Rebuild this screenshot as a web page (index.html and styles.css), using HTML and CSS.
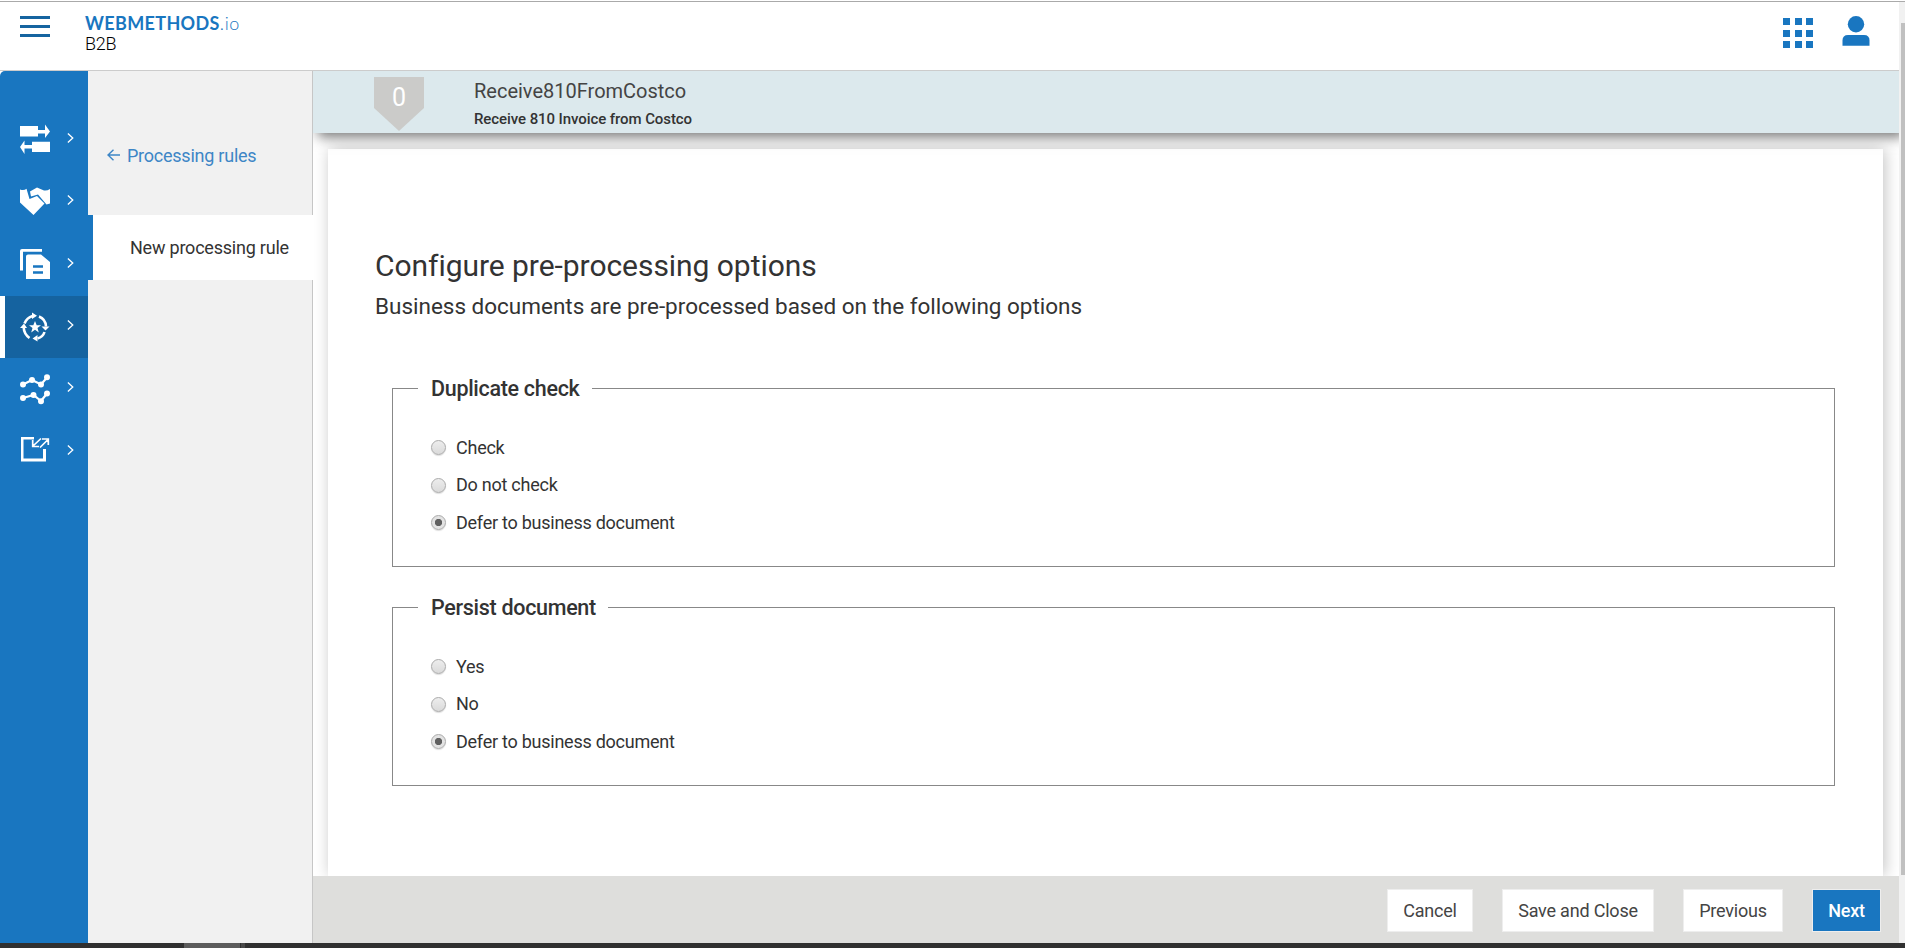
FILE: index.html
```html
<!DOCTYPE html>
<html lang="en">
<head>
<meta charset="utf-8">
<title>webMethods.io B2B</title>
<link rel="stylesheet" href="styles.css">
</head>
<body>
<div class="window">
  <div class="app">
    <header class="header">
      <div class="menu"><span></span><span></span><span></span></div>
      <div class="brand">
        <div class="brand-name"><b>WEBMETHODS</b><span>.io</span></div>
        <div class="brand-product">B2B</div>
      </div>
      <div class="header-tools">
        <div class="apps"><i></i><i></i><i></i><i></i><i></i><i></i><i></i><i></i><i></i></div>
        <svg class="user" width="28" height="30" viewBox="0 0 28 30"><circle cx="14" cy="8.2" r="8.2"/><path d="M0.5 29.7V24.5Q0.500 19 6 19H22Q27.500 19 27.500 24.500V29.700Z"/></svg>
      </div>
    </header>
    <div class="body">
      <nav class="rail">
        <a class="rail-item"><svg class="icon" viewBox="0 0 30 30"><path d="M0 3H18V7H25V1.500L30 8.500L25 15V10.500H18V13.500H0ZM30 29H12V25.500H4.500V31L0 24L4.500 17.500V22H12V18.700H30Z"/></svg><svg class="chev" viewBox="0 0 8 12"><path d="M1 .8L6.600 6L1 11.200"/></svg></a>
        <a class="rail-item"><svg class="icon" viewBox="0 0 30 30"><path d="M0 4.500Q4 6 6.500 3.800L9.500 14L17 11L24.500 18.500L13.500 30L0 17.500ZM10 6.500L17 2.500L24 5.500Q27 6 30 4V18.500L26.500 19.500L18 9.500L11 11.500Z"/></svg><svg class="chev" viewBox="0 0 8 12"><path d="M1 .8L6.600 6L1 11.200"/></svg></a>
        <a class="rail-item"><svg class="icon icon-low" viewBox="0 0 30 30"><path d="M2 0H22V2.700H3V21.500H0V2Q0 0 2 0ZM8 5.500H21L30 13V30H6V7.500Q6 5.500 8 5.500Z"/><path class="cut" d="M13 17.500H23M13 23.500H23"/></svg><svg class="chev" viewBox="0 0 8 12"><path d="M1 .8L6.600 6L1 11.200"/></svg></a>
        <a class="rail-item rail-item-active"><svg class="icon icon-low" viewBox="0 0 30 30"><path d="M15 9L16.700 13.300H21L17.500 16L18.800 20.500L15 17.800L11.200 20.500L12.500 16L9 13.300H13.300ZM12 0.500L17 3.700L12 7ZM21.500 14.500H29.500L25.500 18.500ZM17.500 29.500L12.500 26.500L17.500 23ZM0 16L4 11.500L7 16Z"/><path class="line" d="M4.500 11.500Q7 5.500 12.500 4M19 4.500Q25.500 7 26 14.500M24.500 20Q23 25 17.500 26.500M9.500 26Q4 22 3.700 15.500"/></svg><svg class="chev" viewBox="0 0 8 12"><path d="M1 .8L6.600 6L1 11.200"/></svg></a>
        <a class="rail-item"><svg class="icon icon-low" viewBox="0 0 30 30"><path class="line thin" d="M3 10.500L12 6L21 10.500L27 3.500M3 24L13.500 21L21 27L27 19.500"/><path d="M0 10.500a3 3 0 1 0 6 0a3 3 0 1 0-6 0M9 6a3 3 0 1 0 6 0a3 3 0 1 0-6 0M18 10.500a3 3 0 1 0 6 0a3 3 0 1 0-6 0M24 3.300a3 3 0 1 0 6 0a3 3 0 1 0-6 0M0 24a3 3 0 1 0 6 0a3 3 0 1 0-6 0M10.500 21a3 3 0 1 0 6 0a3 3 0 1 0-6 0M18 27.300a3 3 0 1 0 6 0a3 3 0 1 0-6 0M24 19.500a3 3 0 1 0 6 0a3 3 0 1 0-6 0"/></svg><svg class="chev" viewBox="0 0 8 12"><path d="M1 .8L6.600 6L1 11.200"/></svg></a>
        <a class="rail-item"><svg class="icon" viewBox="0 0 30 30"><path d="M1 2H14V4.500H3.500V23.500H23V14H26V26.500H1Z"/><path class="line slim" d="M21 3.500L13.500 10.500M12.700 5V11.500H19M20 12.500L27.500 5M22 4H28.300V10"/></svg><svg class="chev" viewBox="0 0 8 12"><path d="M1 .8L6.600 6L1 11.200"/></svg></a>
      </nav>
      <aside class="subnav">
        <a class="back"><svg width="13" height="12" viewBox="0 0 13 12"><path d="M13 6H1M6.500 .7L1 6L6.500 11.300"/></svg><span>Processing rules</span></a>
        <a class="subnav-item">New processing rule</a>
      </aside>
      <main class="main">
        <div class="rulebar">
          <div class="tag">0</div>
          <div>
            <div class="rule-name">Receive810FromCostco</div>
            <div class="rule-desc">Receive 810 Invoice from Costco</div>
          </div>
        </div>
        <div class="canvas">
          <section class="card">
            <h1 class="title">Configure pre-processing options</h1>
            <p class="subtitle">Business documents are pre-processed based on the following options</p>
            <fieldset class="group">
              <legend class="legend">Duplicate check</legend>
              <div class="option"><i class="radio"></i>Check</div>
              <div class="option"><i class="radio"></i>Do not check</div>
              <div class="option"><i class="radio radio-on"></i>Defer to business document</div>
            </fieldset>
            <fieldset class="group">
              <legend class="legend">Persist document</legend>
              <div class="option"><i class="radio"></i>Yes</div>
              <div class="option"><i class="radio"></i>No</div>
              <div class="option"><i class="radio radio-on"></i>Defer to business document</div>
            </fieldset>
          </section>
        </div>
        <footer class="actions">
          <a class="button cancel">Cancel</a>
          <a class="button save">Save and Close</a>
          <a class="button previous">Previous</a>
          <a class="button next">Next</a>
        </footer>
      </main>
    </div>
  </div>
  <div class="scrollbar"><div class="thumb"></div></div>
</div>
<div class="taskbar"><i></i><b></b></div>
</body>
</html>
```
FILE: styles.css
```css
* { box-sizing: border-box; }
body {
  margin: 0;
  width: 1905px;
  height: 948px;
  overflow: hidden;
  background: #fff;
  color: #333;
  font: 18px/24px Roboto, sans-serif;
}
.window { display: flex; height: 942px; margin-top: 1px; border-top: 1px solid #aaa; }
.app { width: 1899px; display: flex; flex-direction: column; }
.header { display: flex; height: 69px; border-bottom: 1px solid #ccc; }
.menu { width: 66px; padding: 14px 16px 0 20px; }
.menu span { display: block; height: 3px; margin-bottom: 6px; background: #1664a0; }
.brand { margin-left: 19px; padding-top: 10px; }
.brand-name { color: #1976c0; font: 18px/23px Lato, sans-serif; }
.brand-name b { font-weight: 700; letter-spacing: 0.35px; }
.brand-name span { font-weight: 300; letter-spacing: 0.7px; }
.brand-product { color: #000; font-weight: 300; line-height: 20px; letter-spacing: -0.2px; margin-top: -1px; }
.header-tools { display: flex; margin-left: auto; padding-right: 29px; gap: 29px; }
.apps {
  display: grid;
  grid-template-columns: repeat(3, 7px);
  grid-template-rows: repeat(3, 7px);
  gap: 4.5px;
  margin-top: 16px;
}
.apps i { background: #1976c0; }
.user { margin-top: 14px; fill: #1976c0; }
.body { display: flex; flex: 1; min-height: 0; }

.rail { width: 88px; padding-top: 38px; background: #1976c0; border-radius: 5px 0 0; }
.rail-item { display: flex; align-items: center; height: 62.3px; padding: 0 14px 4px 20px; gap: 17px; }
.rail-item-active { background: #1563a0; border-left: 5px solid #fff; padding-left: 15px; }
.icon { width: 30px; height: 30px; fill: #fff; overflow: visible; }
.icon-low { margin-top: 3px; }
.icon .cut { stroke: #1976c0; stroke-width: 2.5; }
.icon .line { fill: none; stroke: #fff; stroke-width: 2.6; }
.icon .thin { stroke-width: 2.2; }
.icon .slim { stroke-width: 1.7; }
.chev { width: 8px; height: 12px; fill: none; stroke: #fff; stroke-width: 1.5; }

.subnav { width: 225px; padding-top: 73px; letter-spacing: -0.22px; background: linear-gradient(to right, #f1f1f1 224px, #c6c6c6 224px); }
.back { display: flex; align-items: center; height: 24px; padding-left: 19px; gap: 7px; color: #3d86c6; letter-spacing: -0.24px; }
.back svg { margin-top: -2px; fill: none; stroke: #3d86c6; stroke-width: 1.4; }
.subnav-item { display: block; height: 65px; margin-top: 47px; padding: 21px 0 0 37px; border-left: 5px solid #1976c0; background: #fff; }

.main { display: flex; flex-direction: column; width: 1586px; overflow: hidden; }
.rulebar {
  position: relative;
  display: flex;
  height: 62px;
  flex: none;
  padding: 6px 0 0 61px;
  background: #dce9ed;
  box-shadow: 5px 4px 12px #777;
}
.tag {
  width: 50px;
  height: 54px;
  margin-right: 50px;
  background: #cbcbc9;
  clip-path: polygon(0 0, 100% 0, 100% 31px, 50% 100%, 0 31px);
  color: #fff;
  font-size: 25px;
  line-height: 41px;
  text-align: center;
}
.rule-name { margin-top: 2px; color: #444; font-size: 20px; line-height: 24px; }
.rule-desc { margin-top: 6px; font-size: 15px; line-height: 20px; font-weight: 500; letter-spacing: -0.08px; }
.canvas { flex: 1; min-height: 0; padding: 16px 16px 0 15px; overflow: hidden; }
.card { height: 727px; padding: 99px 48px 0 47px; background: #fff; box-shadow: 2px 0 15px rgba(0, 0, 0, .24); }
.title { margin: 0; font-size: 30px; font-weight: 400; line-height: 36px; letter-spacing: -0.05px; }
.subtitle { margin: 8px 0 0; font-size: 22.5px; line-height: 28px; letter-spacing: -0.01px; }
.group { height: 193px; margin: 54px 0 0 17px; padding: 27px 0 0 38px; border: 1px solid #888; }
.group + .group { margin-top: 26px; }
.legend { margin-left: -13px; padding: 2px 12px 0 13px; font-size: 21.5px; line-height: 26px; font-weight: 500; letter-spacing: -0.3px; }
.option { display: flex; align-items: center; gap: 10px; height: 37.5px; letter-spacing: -0.25px; }
.radio {
  width: 15px;
  height: 15px;
  border: 1px solid #aaa;
  border-radius: 50%;
  background: linear-gradient(#ededed, #dadada);
  box-shadow: 0 1px 1px #ddd;
}
.radio-on { background: radial-gradient(circle, #606060 3.3px, #e3e3e3 4px); }
.actions { display: flex; height: 67px; padding: 13px 18px 0 0; justify-content: flex-end; background: #dededc; }
.button {
  height: 43px;
  border: 1px solid #eee;
  background: #fff;
  color: #444;
  line-height: 42px;
  text-align: center;
  letter-spacing: -0.2px;
}
.cancel { width: 86px; margin-right: 29px; }
.save { width: 152px; margin-right: 29px; }
.previous { width: 100px; margin-right: 29px; }
.next { width: 69px; background: #1976c0; color: #fff; font-weight: 500; }
.scrollbar { width: 6px; padding: 21px 0 0 2px; background: #f1f1f1; }
.thumb { height: 852px; background: #c0c0c0; }
.taskbar { display: flex; height: 5px; padding-left: 184px; background: #303030; }
.taskbar i { width: 56px; background: #5c5c5c; }
.taskbar b { width: 4px; margin-left: 1px; background: #484848; }
```
